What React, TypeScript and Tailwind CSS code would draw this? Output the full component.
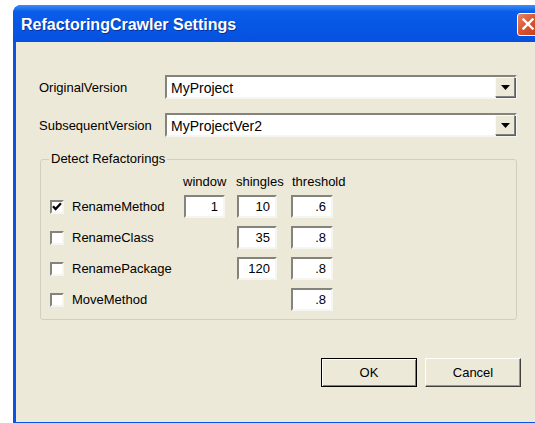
import { useState } from "react";

const font = "font-['Liberation_Sans',Arial,sans-serif]";

// classic sunken edit field border
const sunken =
  "border-2 border-t-[#85847c] border-l-[#85847c] border-b-[#f6f5ef] border-r-[#f6f5ef] bg-white";

const ComboBox = ({ value }: { value: string }) => (
  <div className={`flex items-center h-[24px] w-[352px] ${sunken}`}>
    <span className="flex-1 pl-[4px] pt-[1px] text-[14px] text-black leading-none">{value}</span>
    <div className="w-[20px] h-[20px] flex items-center justify-center bg-[#ECE9D8] border border-t-[#fbfaf5] border-l-[#fbfaf5] border-b-[#808080] border-r-[#808080] shadow-[1px_1px_0_#5f5e58]">
      <svg width="9" height="5" viewBox="0 0 9 5">
        <path d="M0 0h9L4.5 5z" fill="#000" />
      </svg>
    </div>
  </div>
);

const CheckBox = ({ checked, onToggle }: { checked: boolean; onToggle: () => void }) => (
  <button
    onClick={onToggle}
    className={`w-[14px] h-[14px] flex items-center justify-center p-0 ${sunken}`}
  >
    {checked && (
      <svg width="10" height="9" viewBox="0 0 10 9">
        <path d="M1 4.2l2.6 2.9L9 1.3" stroke="#000" strokeWidth="2.3" fill="none" />
      </svg>
    )}
  </button>
);

const NumField = ({ value, width }: { value: string; width: string }) => (
  <div className={`h-[23px] ${width} flex items-center justify-end pr-[5px] pt-[1px] text-[13px] text-black ${sunken}`}>
    {value}
  </div>
);

const rows = [
  { name: "RenameMethod", window: "1", shingles: "10", threshold: ".6" },
  { name: "RenameClass", window: "", shingles: "35", threshold: ".8" },
  { name: "RenamePackage", window: "", shingles: "120", threshold: ".8" },
  { name: "MoveMethod", window: "", shingles: "", threshold: ".8" },
];

const App = () => {
  const [checked, setChecked] = useState([true, false, false, false]);

  const toggle = (i: number) =>
    setChecked((c) => c.map((v, j) => (j === i ? !v : v)));

  return (
    <div className={`w-[535px] h-[423px] overflow-hidden bg-white pl-[13px] pt-[5px] ${font}`}>
      <div className="w-[530px] h-[420px] flex flex-col rounded-t-[8px] bg-[#0A54E4] px-[3px] pb-[3px] overflow-hidden">
        {/* title bar */}
        <div className="h-[37px] -mx-[3px] flex items-center bg-linear-to-b from-[#3A8EF8] via-[#0A5CEA] via-[18%] to-[#0551DF] rounded-t-[8px]">
          <span className="pl-[8px] pt-[3px] text-white font-bold text-[16px] [text-shadow:1px_1px_0_#0b2e95]">
            RefactoringCrawler Settings
          </span>
          <div className="ml-auto mr-[4px] mt-[1px] w-[22px] h-[23px] rounded-[3px] border border-white bg-linear-to-br from-[#E98466] via-[#D9532E] to-[#C2401C] flex items-center justify-center">
            <svg width="12" height="12" viewBox="0 0 12 12">
              <path d="M1.5 1.5l9 9M10.5 1.5l-9 9" stroke="#fff" strokeWidth="2.4" strokeLinecap="square" />
            </svg>
          </div>
        </div>

        {/* client area */}
        <div className="flex-1 bg-[#ECE9D8] flex flex-col pt-[33px] text-[13px] text-black">
          <div className="flex items-center pl-[23px]">
            <span className="w-[126px] pt-[2px]">OriginalVersion</span>
            <ComboBox value="MyProject" />
          </div>
          <div className="flex items-center pl-[23px] mt-[14px]">
            <span className="w-[126px] pt-[2px]">SubsequentVersion</span>
            <ComboBox value="MyProjectVer2" />
          </div>

          <fieldset className="mt-[14px] ml-[24px] w-[477px] border border-[#D0D0BF] rounded-[3px] pl-[9px] pb-[8px]">
            <legend className="px-[2px] ml-[-1px] leading-[16px]">Detect Refactorings</legend>
            <div className="grid grid-cols-[134px_53px_54px_auto] mt-[7px] leading-[16px]">
              <span />
              <span className="-ml-[1px]">window</span>
              <span className="-ml-[1px]">shingles</span>
              <span className="ml-[1px]">threshold</span>
            </div>
            <div className="flex flex-col gap-[8px] mt-[5px]">
              {rows.map((r, i) => (
                <div key={r.name} className="grid grid-cols-[134px_53px_54px_auto] items-center h-[23px]">
                  <div className="flex items-center gap-[8px]">
                    <CheckBox checked={checked[i]} onToggle={() => toggle(i)} />
                    <span className="pt-[1px]">{r.name}</span>
                  </div>
                  <div>{r.window && <NumField value={r.window} width="w-[41px]" />}</div>
                  <div>{r.shingles && <NumField value={r.shingles} width="w-[40px]" />}</div>
                  <div>{r.threshold && <NumField value={r.threshold} width="w-[42px]" />}</div>
                </div>
              ))}
            </div>
          </fieldset>

          <div className="flex gap-[8px] ml-[305px] mt-[38px]">
            <button className="w-[96px] h-[29px] border border-black bg-[#ECE9D8] shadow-[inset_1px_1px_0_#fff,inset_-1px_-1px_0_#808080]">
              OK
            </button>
            <button className="w-[96px] h-[29px] bg-[#ECE9D8] border border-t-[#fff] border-l-[#fff] border-b-[#404040] border-r-[#404040] shadow-[inset_-1px_-1px_0_#9a9990]">
              Cancel
            </button>
          </div>
        </div>
      </div>
    </div>
  );
};

export default App;
